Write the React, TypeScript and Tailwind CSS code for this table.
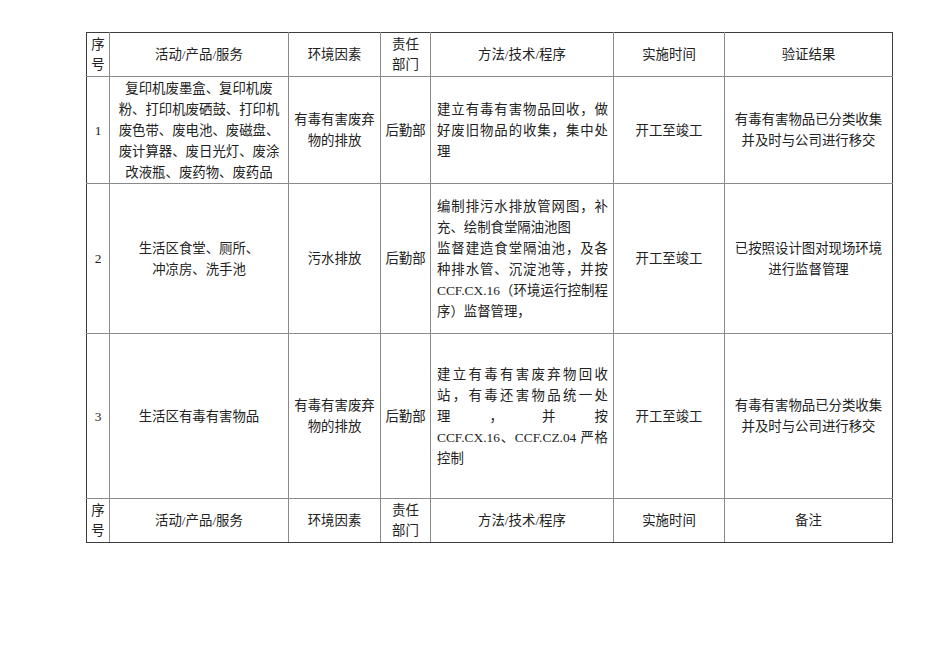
import React from "react";

type TdProps = {
  children?: React.ReactNode;
  first?: boolean;
  last?: boolean;
  top?: boolean;
  bottom?: boolean;
  left?: boolean;
  pad?: string;
};

function Td({ children, first, last, top, bottom, left, pad }: TdProps) {
  const cls = [
    "border border-[#8a8a8a] align-middle py-0",
    left ? "text-left" : "text-center",
    pad ?? "px-[5px]",
    first ? "border-l-[#3c3c3c]" : "",
    last ? "border-r-[#3c3c3c]" : "",
    top ? "border-t-[#3c3c3c]" : "",
    bottom ? "border-b-[#3c3c3c]" : "",
  ].join(" ");
  return <td className={cls}>{children}</td>;
}

function J({ children }: { children: React.ReactNode }) {
  return <div className="text-justify [text-align-last:justify]">{children}</div>;
}

function L({ children }: { children: React.ReactNode }) {
  return <div>{children}</div>;
}

function HeaderRow({ top, bottom, last }: { top?: boolean; bottom?: boolean; last: string }) {
  return (
    <tr className="h-[44px] leading-[20px]">
      <Td first top={top} bottom={bottom} pad="px-0">
        <L>序</L>
        <L>号</L>
      </Td>
      <Td top={top} bottom={bottom}>活动/产品/服务</Td>
      <Td top={top} bottom={bottom}>环境因素</Td>
      <Td top={top} bottom={bottom} pad="px-0">
        <L>责任</L>
        <L>部门</L>
      </Td>
      <Td top={top} bottom={bottom}>方法/技术/程序</Td>
      <Td top={top} bottom={bottom}>实施时间</Td>
      <Td top={top} bottom={bottom} last>
        {last}
      </Td>
    </tr>
  );
}

export default function App() {
  return (
    <div className="min-h-[672px] w-[950px] bg-white pt-[32px] pl-[86px] text-[#222] font-['Liberation_Serif','Noto_Sans_CJK_SC',serif] text-[13.4px]">
      <table className="table-fixed border-collapse w-[806px]">
        <colgroup>
          <col className="w-[23px]" />
          <col className="w-[179px]" />
          <col className="w-[92px]" />
          <col className="w-[50px]" />
          <col className="w-[183px]" />
          <col className="w-[111px]" />
          <col className="w-[168px]" />
        </colgroup>
        <tbody>
          <HeaderRow top last="验证结果" />
          <tr className="h-[107px] leading-[21px]">
            <Td first pad="px-0">1</Td>
            <Td>
              <L>复印机废墨盒、复印机废</L>
              <L>粉、打印机废硒鼓、打印机</L>
              <L>废色带、废电池、废磁盘、</L>
              <L>废计算器、废日光灯、废涂</L>
              <L>改液瓶、废药物、废药品</L>
            </Td>
            <Td>
              <L>有毒有害废弃</L>
              <L>物的排放</L>
            </Td>
            <Td pad="px-0">后勤部</Td>
            <Td left pad="pl-[6px] pr-[5px]">
              <J>建立有毒有害物品回收，做</J>
              <J>好废旧物品的收集，集中处</J>
              <L>理</L>
            </Td>
            <Td>开工至竣工</Td>
            <Td last>
              <L>有毒有害物品已分类收集</L>
              <L>并及时与公司进行移交</L>
            </Td>
          </tr>
          <tr className="h-[150px] leading-[21px]">
            <Td first pad="px-0">2</Td>
            <Td>
              <L>生活区食堂、厕所、</L>
              <L>冲凉房、洗手池</L>
            </Td>
            <Td>污水排放</Td>
            <Td pad="px-0">后勤部</Td>
            <Td left pad="pl-[6px] pr-[5px]">
              <J>编制排污水排放管网图，补</J>
              <L>充、绘制食堂隔油池图</L>
              <J>监督建造食堂隔油池，及各</J>
              <J>种排水管、沉淀池等，并按</J>
              <J>CCF.CX.16（环境运行控制程</J>
              <L>序）监督管理，</L>
            </Td>
            <Td>开工至竣工</Td>
            <Td last>
              <L>已按照设计图对现场环境</L>
              <L>进行监督管理</L>
            </Td>
          </tr>
          <tr className="h-[165px] leading-[21px]">
            <Td first pad="px-0">3</Td>
            <Td>生活区有毒有害物品</Td>
            <Td>
              <L>有毒有害废弃</L>
              <L>物的排放</L>
            </Td>
            <Td pad="px-0">后勤部</Td>
            <Td left pad="pl-[6px] pr-[5px]">
              <J>建立有毒有害废弃物回收</J>
              <J>站，有毒还害物品统一处</J>
              <J>理，并按</J>
              <J>CCF.CX.16、CCF.CZ.04 严格</J>
              <L>控制</L>
            </Td>
            <Td>开工至竣工</Td>
            <Td last>
              <L>有毒有害物品已分类收集</L>
              <L>并及时与公司进行移交</L>
            </Td>
          </tr>
          <HeaderRow bottom last="备注" />
        </tbody>
      </table>
    </div>
  );
}
